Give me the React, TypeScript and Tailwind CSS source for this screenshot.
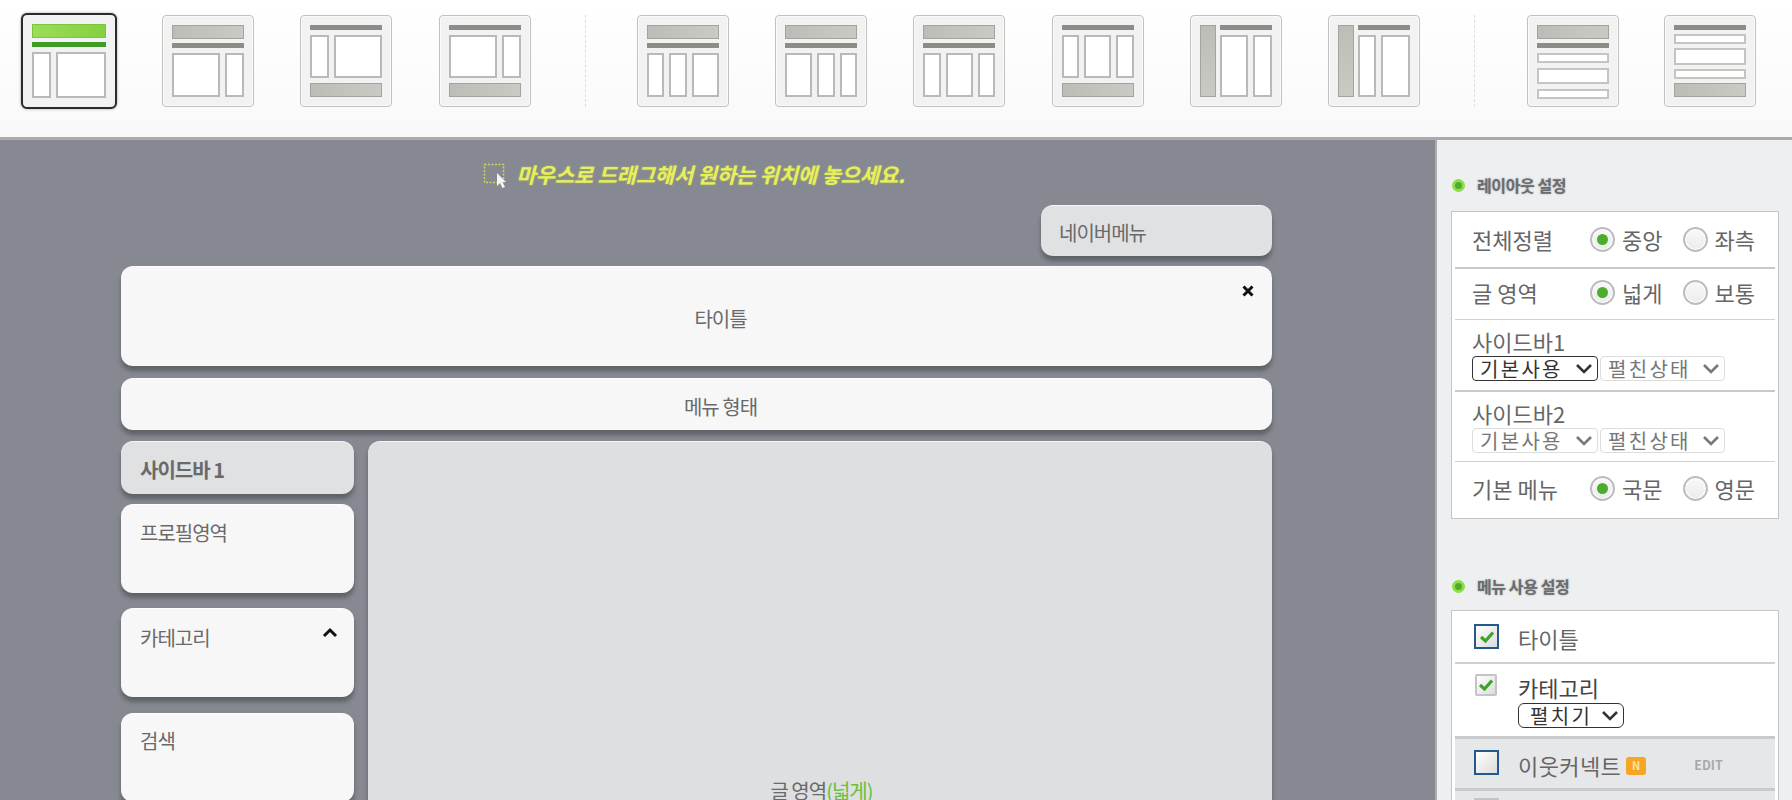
import React from "react";

type Part = "n" | "m" | "w";
const grow: Record<Part, string> = { n: "flex-[17]", m: "flex-[29]", w: "flex-[50]" };

function Band({ on }: { on?: boolean }) {
  return <div className={`h-[14px] shrink-0 border ${on ? "border-[#7cc63c] bg-gradient-to-r from-[#9bdc5a] to-[#86d040]" : "border-[#a3a49e] bg-gradient-to-r from-[#bcbdb7] to-[#c9cac4]"}`} />;
}
function Strip({ on }: { on?: boolean }) {
  return <div className={`h-[5px] shrink-0 ${on ? "bg-[#3f9c26]" : "bg-[#8c8d86]"}`} />;
}
function Cols({ parts }: { parts: Part[] }) {
  return (
    <div className="flex flex-1 gap-[5px]">
      {parts.map((p, i) => (
        <div key={i} className={`${grow[p]} border-2 border-[#b9b9b6] bg-white`} />
      ))}
    </div>
  );
}
function Frame({ on, children, className = "" }: { on?: boolean; children: React.ReactNode; className?: string }) {
  return (
    <div className={`flex h-[92px] w-[92px] shrink-0 flex-col gap-[5px] rounded-[4px] bg-[#f2f2f2] p-[9px] ${on ? "outline-2 outline-[#2b2b2b] shadow-[0_0_3px_2px_rgba(0,0,0,0.35)]" : "border border-[#c2c2c0] shadow-[inset_0_0_0_1px_#fafafa]"} ${className}`}>
      {children}
    </div>
  );
}
function TopThumb({ parts, on }: { parts: Part[]; on?: boolean }) {
  return (
    <Frame on={on}>
      <div className="flex flex-col gap-[4px]">
        <Band on={on} />
        <Strip on={on} />
      </div>
      <Cols parts={parts} />
    </Frame>
  );
}
function BottomThumb({ parts }: { parts: Part[] }) {
  return (
    <Frame>
      <Strip />
      <Cols parts={parts} />
      <Band />
    </Frame>
  );
}
function SideThumb({ parts }: { parts: Part[] }) {
  return (
    <Frame className="!flex-row !gap-[4px]">
      <div className="w-[16px] shrink-0 border border-[#a3a49e] bg-gradient-to-b from-[#bcbdb7] to-[#c9cac4]" />
      <div className="flex flex-1 flex-col gap-[5px]">
        <Strip />
        <Cols parts={parts} />
      </div>
    </Frame>
  );
}
const Row = ({ h }: { h: string }) => <div className={`${h} shrink-0 border-2 border-[#c4c4c1] bg-white`} />;
function StackTop() {
  return (
    <Frame>
      <div className="flex flex-col gap-[4px]">
        <Band />
        <Strip />
      </div>
      <Row h="h-[10px]" />
      <Row h="h-[16px]" />
      <Row h="h-[10px]" />
    </Frame>
  );
}
function StackBottom() {
  return (
    <Frame className="!gap-[4px]">
      <Strip />
      <Row h="h-[10px]" />
      <Row h="h-[17px]" />
      <Row h="h-[10px]" />
      <Band />
    </Frame>
  );
}
const Sep = () => <div className="h-[92px] w-0 shrink-0 border-l border-dashed border-[#dddddd]" />;

function TopBar() {
  return (
    <div className="flex h-[140px] shrink-0 items-start border-b-[3px] border-[#a9abb0] bg-gradient-to-b from-white to-[#f9f9f9] pl-[23px] pt-[15px]">
      <div className="flex gap-[46.5px]">
        <TopThumb parts={["n", "w"]} on />
        <TopThumb parts={["w", "n"]} />
        <BottomThumb parts={["n", "w"]} />
        <BottomThumb parts={["w", "n"]} />
      </div>
      <div className="ml-[54.5px] mr-[51px]"><Sep /></div>
      <div className="flex gap-[46.2px]">
        <TopThumb parts={["n", "n", "m"]} />
        <TopThumb parts={["m", "n", "n"]} />
        <TopThumb parts={["n", "m", "n"]} />
        <BottomThumb parts={["n", "m", "n"]} />
        <SideThumb parts={["m", "n"]} />
        <SideThumb parts={["n", "m"]} />
      </div>
      <div className="ml-[54px] mr-[52px]"><Sep /></div>
      <div className="flex gap-[45.500px]">
        <StackTop />
        <StackBottom />
      </div>
    </div>
  );
}

const blockShadow = "shadow-[0_5px_4px_rgba(40,40,45,0.4)]";
function Block({ className = "", children }: { className?: string; children?: React.ReactNode }) {
  return (
    <div className={`relative rounded-[12px] border-t border-white/70 text-[20px] tracking-[-1px] text-[#6a6a6a] ${blockShadow} ${className}`}>
      {children}
    </div>
  );
}

function Canvas() {
  return (
    <main className="flex min-w-0 flex-1 flex-col bg-[#868992] pl-[121px] pr-[163px]">
      <div className="flex h-[65px] items-center justify-center pr-[5px] pt-[4px]">
        <svg width="26" height="26" viewBox="0 0 26 26" className="mr-[7px] mt-[2px]">
          <rect x="1.5" y="1.5" width="19" height="18" fill="none" stroke="#cdd65a" strokeWidth="1.5" strokeDasharray="2 1.5" />
          <path d="M14 10 L14 23 L17 20 L19.500 25 L22 24 L19.500 19 L23 19 Z" fill="#f4f4f4" />
        </svg>
        <span className="text-[21px] font-bold italic tracking-[-0.2px] text-[#e6f05a] [text-shadow:0_0_2px_rgba(215,225,70,0.6)]">
          마우스로 드래그해서 원하는 위치에 놓으세요.
        </span>
      </div>
      <div className="flex justify-end">
        <Block className="flex h-[51px] w-[231px] items-center bg-[#e0e1e3] pl-[18px] pt-[3px]">네이버메뉴</Block>
      </div>
      <Block className="mt-[10px] flex h-[100px] items-center justify-center bg-[#f7f7f8] pl-[48px] pt-[4px]">
        타이틀
        <svg width="14" height="14" viewBox="0 0 14 14" className="absolute right-[17px] top-[17px]">
          <path d="M2.500 2.500 L11.500 11.500 M11.500 2.500 L2.500 11.500" stroke="#111" strokeWidth="3" />
        </svg>
      </Block>
      <Block className="mt-[12px] flex h-[52px] shrink-0 items-center justify-center bg-[#f7f7f8] pl-[48px] pt-[4px]">메뉴 형태</Block>
      <div className="mt-[11px] flex min-h-0 flex-1 gap-[14px]">
        <div className="flex w-[233px] shrink-0 flex-col">
          <Block className="flex h-[53px] shrink-0 items-center bg-[#e0e1e3] pl-[19px] pt-[4px] font-bold">사이드바 1</Block>
          <Block className="mt-[10px] h-[89px] shrink-0 bg-[#f7f7f8] pl-[19px] pt-[13px]">프로필영역</Block>
          <Block className="mt-[15px] h-[89px] shrink-0 bg-[#f7f7f8] pl-[19px] pt-[14px]">
            카테고리
            <svg width="16" height="11" viewBox="0 0 16 11" className="absolute right-[16px] top-[18px]">
              <path d="M2 9 L8 3 L14 9" fill="none" stroke="#111" strokeWidth="3" />
            </svg>
          </Block>
          <Block className="mt-[16px] h-[89px] shrink-0 bg-[#f7f7f8] pl-[19px] pt-[12px]">검색</Block>
        </div>
        <Block className="flex min-w-0 flex-1 items-end justify-center rounded-b-none bg-[#dedfe1] pl-[3px]">
          <span className="-mb-[4px] leading-[26px]">글 영역<span className="text-[#62c13d]">(넓게)</span></span>
        </Block>
      </div>
    </main>
  );
}

function Dot() {
  return <span className="h-[13px] w-[13px] shrink-0 rounded-full border-[3px] border-[#8fdc4d] bg-[#4fae25]" />;
}
function Title({ children }: { children: React.ReactNode }) {
  return (
    <div className="flex items-center gap-[12px] pl-[1px] text-[16px] font-bold tracking-[-0.4px] text-[#6a6c70] [text-shadow:0_0_2px_rgba(60,60,60,0.45)]">
      <Dot />
      {children}
    </div>
  );
}
function Radio({ on, label }: { on?: boolean; label: string }) {
  return (
    <div className="flex items-center gap-[7px]">
      <span className="flex h-[25px] w-[25px] items-center justify-center rounded-full border-2 border-[#bdbdbd] bg-gradient-to-b from-[#f8f8f8] to-[#ececec] shadow-[inset_0_0_0_1px_#fff]">
        {on && <span className="h-[11px] w-[11px] rounded-full bg-[#4bad2b]" />}
      </span>
      <span>{label}</span>
    </div>
  );
}
function RadioRow({ label, a, b, className = "" }: { label: string; a: string; b: string; className?: string }) {
  return (
    <div className={`flex items-center justify-between pl-[17px] pr-[20px] ${className}`}>
      <span>{label}</span>
      <div className="flex gap-[20px]">
        <Radio on label={a} />
        <Radio label={b} />
      </div>
    </div>
  );
}
function Chevron() {
  return (
    <svg width="18" height="11" viewBox="0 0 18 11" className="shrink-0">
      <path d="M2 2 L9 9 L16 2" fill="none" stroke="currentColor" strokeWidth="2.600" />
    </svg>
  );
}
function Sel({ v, off, w, className = "" }: { v: string; off?: boolean; w: string; className?: string }) {
  return (
    <button
      type="button"
      className={`${w} flex h-[25px] items-center justify-between rounded-[4px] border pl-[7px] pr-[4px] text-[20px] leading-[23px] tracking-[2.300px] ${off ? "border-[#dddddd] text-[#777777]" : "border-[#333333] text-[#333333]"} ${className}`}
    >
      <span>{v}</span>
      <Chevron />
    </button>
  );
}
function Check({ on, active, faint }: { on?: boolean; active?: boolean; faint?: boolean }) {
  const box = active
    ? "h-[25px] w-[25px] border-2 border-[#23598d]"
    : faint
      ? "h-[25px] w-[25px] border-2 border-[#c4c4c4]"
      : "h-[22px] w-[22px] rounded-[2px] border-2 border-[#c4c4c4]";
  return (
    <span className={`flex shrink-0 items-center justify-center ${box} bg-gradient-to-br from-white to-[#dcdcdc]`}>
      {on && (
        <svg width="16" height="14" viewBox="0 0 16 14">
          <path d="M2 7 L6.500 11 L14 2.500" fill="none" stroke="#3da32a" strokeWidth="3.200" />
        </svg>
      )}
    </span>
  );
}

function Aside() {
  return (
    <aside className="flex w-[357px] shrink-0 flex-col border-l-[2px] border-[#a9abb0] bg-[#eeeff1] pl-[14px] pr-[13px] pt-[33px] text-[22px] text-[#666666]">
      <Title>레이아웃 설정</Title>
      <div className="mt-[14px] flex h-[308px] shrink-0 flex-col border border-[#c3c4c6] bg-white px-[3px]">
        <RadioRow label="전체정렬" a="중앙" b="좌측" className="h-[57px] shrink-0 border-b-2 border-[#c9c9c9] pb-[1px]" />
        <RadioRow label="글 영역" a="넓게" b="보통" className="h-[51px] shrink-0 border-b border-[#d0d0d0] pb-[3px]" />
        <div className="h-[72px] shrink-0 border-b-2 border-[#c9c9c9] pl-[17px] pt-[9px] leading-[24px]">
          사이드바1
          <div className="mt-[3px] flex gap-[2px]">
            <Sel v="기본사용" w="w-[126px]" />
            <Sel v="펼친상태" off w="w-[125px]" />
          </div>
        </div>
        <div className="h-[70px] shrink-0 border-b border-[#d0d0d0] pl-[17px] pt-[9px] leading-[24px]">
          사이드바2
          <div className="mt-[3px] flex gap-[2px]">
            <Sel v="기본사용" off w="w-[126px]" />
            <Sel v="펼친상태" off w="w-[125px]" />
          </div>
        </div>
        <RadioRow label="기본 메뉴" a="국문" b="영문" className="flex-1 pb-[3px]" />
      </div>
      <div className="mt-[55px]">
        <Title>메뉴 사용 설정</Title>
      </div>
      <div className="mt-[12px] flex flex-1 flex-col border border-b-0 border-[#c3c4c6] bg-white px-[3px]">
        <div className="flex h-[53px] shrink-0 items-start gap-[19px] border-b-2 border-[#d0d0d0] pl-[19px] pt-[13px]">
          <Check on active />
          <span className="leading-[28px]">타이틀</span>
        </div>
        <div className="flex h-[75px] shrink-0 items-start gap-[21px] border-b-[3px] border-[#c9cacc] pl-[20px] pt-[10px]">
          <Check on />
          <div className="-mt-[1px] flex flex-col items-start leading-[28px] text-[#444444]">
            <span className="mt-[1px] leading-[26px]">카테고리</span>
            <Sel v="펼치기" w="w-[106px]" className="mt-[3px] !rounded-[6px] pl-[11px]" />
          </div>
        </div>
        <div className="flex h-[52px] shrink-0 items-center border-b-[3px] border-[#c9cacc] bg-[#e6e7e9] pb-[2px] pl-[19px] pr-[6px]">
          <Check active />
          <span className="ml-[19px] mt-[5px] tracking-[0.4px]">이웃커넥트</span>
          <span className="ml-[5px] mt-[6px] flex h-[18px] w-[20px] items-center justify-center rounded-[3px] bg-[#f5a623] text-[11px] font-bold text-[#fbe3a8]">N</span>
          <span className="ml-[48px] mt-[6px] text-[12.5px] font-bold text-[#a8a9ab]">EDIT</span>
        </div>
        <div className="flex-1 bg-[#e6e7e9] pl-[19px] pt-[7px]">
          <Check faint />
        </div>
      </div>
    </aside>
  );
}

export default function App() {
  return (
    <div className="flex h-[800px] w-full flex-col overflow-hidden font-['Noto_Sans_CJK_KR','Noto_Sans',sans-serif]">
      <TopBar />
      <div className="flex min-h-0 flex-1">
        <Canvas />
        <Aside />
      </div>
    </div>
  );
}
